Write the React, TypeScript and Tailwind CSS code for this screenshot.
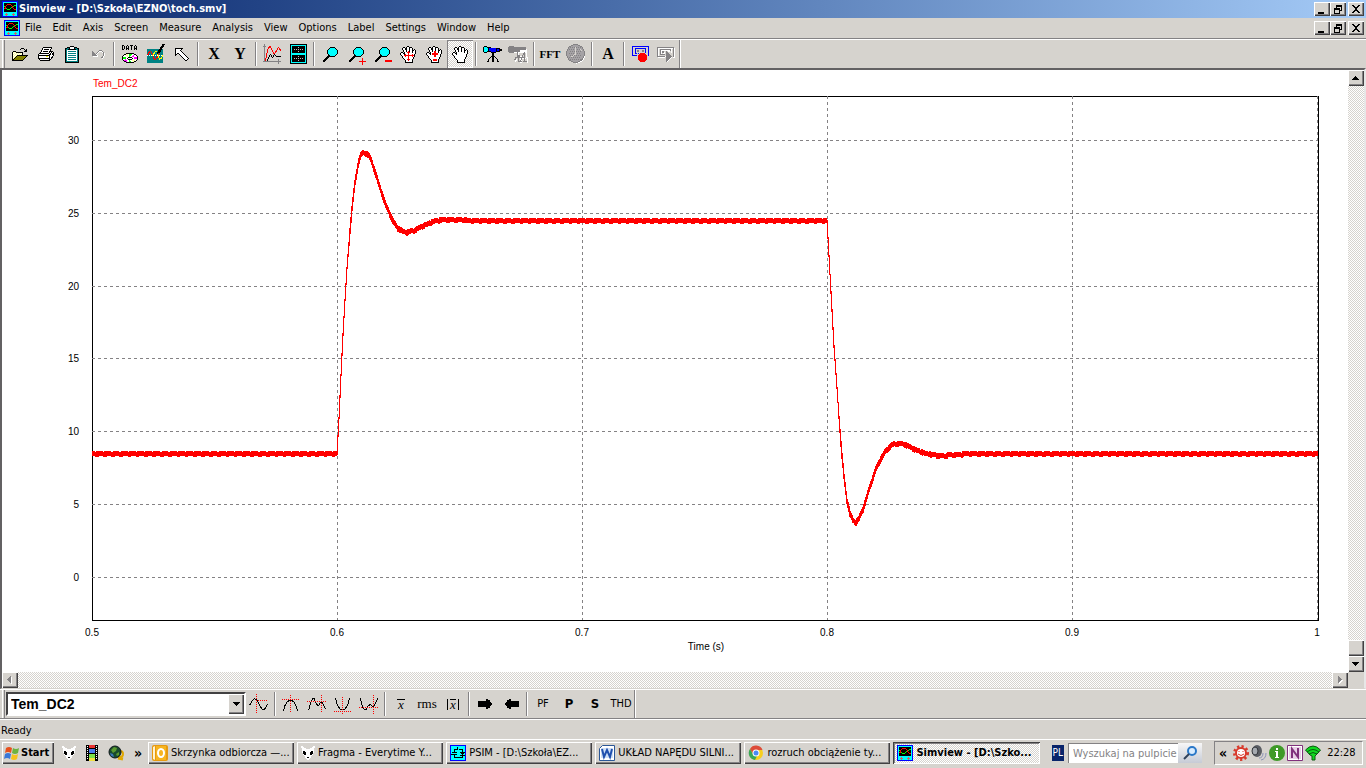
import clsx from "clsx";
import { ReactNode } from "react";

const RAISED =
  "bg-[#d6d3ce] shadow-[inset_1px_1px_#fff,inset_-1px_-1px_#424142,inset_-2px_-2px_#848284]";
const DITHER =
  "bg-[repeating-conic-gradient(#fff_0_25%,#d6d3ce_0_50%)] bg-[length:2px_2px]";

const PALETTE: Record<string, string> = {
  "#": "#000000",
  w: "#ffffff",
  r: "#ff0000",
  b: "#0000ff",
  c: "#00ffff",
  y: "#ffff00",
  Y: "#ffff9c",
  o: "#848200",
  g: "#848284",
  s: "#c6c3c6",
  t: "#008284",
  G: "#00ff00",
  m: "#ff00ff",
};

/* Pixel icon: one character per pixel, dots are transparent */
function Pixels({ rows, children }: { rows: string[]; children?: ReactNode }) {
  const width = Math.max(...rows.map((r) => r.length));
  const paths: Record<string, string> = {};
  rows.forEach((row, y) => {
    [...row].forEach((ch, x) => {
      if (ch === ".") return;
      paths[ch] = (paths[ch] ?? "") + `M${x} ${y}h1v1h-1z`;
    });
  });
  return (
    <svg
      width={width}
      height={rows.length}
      shapeRendering="crispEdges"
      className="shrink-0 overflow-visible"
      aria-hidden="true"
    >
      {Object.entries(paths).map(([ch, d]) => (
        <path key={ch} d={d} fill={PALETTE[ch]} />
      ))}
      {children}
    </svg>
  );
}

const OPEN = [
  ".........###....",
  "........#...#.#.",
  ".............##.",
  ".###........###.",
  "#YwY#######.....",
  "#wYwYwYwYw#.....",
  "#YwYwYwYwY#.....",
  "#wYwY###########",
  "#YwY#ooooooooo#.",
  "#wY#ooooooooo#..",
  "#Y#ooooooooo#...",
  "##ooooooooo#....",
  "###########.....",
];

const PRINT = [
  ".....#########..",
  "....#wwwwwwww#..",
  "....#w#####w#...",
  "...#wwwwwwww#...",
  "...#w#####w####.",
  "..#wwwwwwww#w#w#",
  ".##########w#w##",
  "#wwwwwwwwww##w##",
  "############www#",
  "#wwwwwwwyyw#ww#.",
  "#wwwwwwwwww#w##.",
  "############w#..",
  ".#wwwwwwwww##...",
  "..##########....",
];

const PASTE = [
  ".....####.....",
  "..###wwww###..",
  "##tt#wwww#tt##",
  "#tt########tt#",
  "#twwwwwwwwwwt#",
  "#twttttttttwt#",
  "#twwwwwwwwwwt#",
  "#twttttttttwt#",
  "#twwwwwwwwwwt#",
  "#twttttttttwt#",
  "#twwwwwwwwwwt#",
  "#twttttttttwt#",
  "#twwwwwwwwwwt#",
  "#twttttttttwt#",
  "#twwwwwwwwwwt#",
  "#tttttttttttt#",
  "##############",
];

const UNDO = [
  ".......ggg...",
  "g.....gwwwg..",
  "gg...gw...wg.",
  "ggg.gw.....gw",
  "ggggw......gw",
  "gggggw.....gw",
  ".wwwww....gw.",
  ".........ggw.",
  "..........w..",
];

const DISC = [
  "....########....",
  "..##YYwGGGww##..",
  ".#wwYYwGGwwmww#.",
  "#wwwwYwGwwmmwww#",
  "#GGGww####wwmmm#",
  "#GGGw#wwww#wmmm#",
  "#wwmww####wwYww#",
  ".#mmmwwGwwYYYw#.",
  "..##mwwGGwwY##..",
  "....########....",
];

const ARROW = [
  "########.......",
  "#wwwww#........",
  "#wwww#.........",
  "#wwwww#........",
  "#wwwwww#.......",
  "#w##wwww#......",
  "##..#wwww#.....",
  "#....#wwww#....",
  "......#wwww#...",
  ".......#wwww#..",
  "........#wwww#.",
  ".........#ww#..",
  "..........##...",
];

const HAND = [
  ".......##.......",
  "...##.#ww###....",
  "..#ww##ww#ww#...",
  "..#ww##ww#ww#.#.",
  "...#ww#ww#ww##w#",
  "...#ww#ww#ww#ww#",
  ".##.#wwwwwww#ww#",
  "#ww##wwwwwwwwww#",
  "#www#wwwwwwwww#.",
  ".#wwwwwwwwwwww#.",
  "..#wwwwwwwwwww#.",
  "..#wwwwwwwwww#..",
  "...#wwwwwwwww#..",
  "....#wwwwwww#...",
  ".....#wwwwww#...",
  ".....#wwwwww#...",
  ".....########...",
];

const MAGNIFIER = [
  ".......#####...",
  "......#ccccc#..",
  ".....#ccccccc#.",
  "....#ccccccccc#",
  "....#ccccccccc#",
  "....#ccccccccc#",
  "....#ccccccccc#",
  ".....#ccccccc#.",
  ".....##ccccc#..",
  "....########...",
  "...###.........",
  "..###..........",
  ".###...........",
  "###............",
  "##.............",
];

const SCOPE = [
  ".###...............",
  "#ccc####...........",
  "#cccc#bbbbbbb####..",
  "#cccc#bbbbbbb#bb###",
  "#cccc#bbbbbbb#bb###",
  "#ccc####bbbbb####..",
  ".###....#####......",
  ".........##........",
  ".........##........",
  ".........##........",
  "........####.......",
  ".......#.##.#......",
  "......#..##..#.....",
  ".....#...##...#....",
  ".....#...##...#....",
  "....##...##...##...",
];

const RECORD = [
  "bbbbbbbbbbbbbbbbb",
  "b...............b",
  "b..bbbbbbbbbbb..b",
  "b..b.........b..b",
  "b..b.gg...gg.b..b",
  "b..b.gg...gg.b..b",
  "b..b.........b..b",
  "b..bb.b.rrrrr...b",
  "b......rrrrrrr..b",
  "bbbbb.rrrrrrrrr.b",
  "......rrrrrrrrr..",
  "......rrrrrrrrr..",
  "......rrrrrrrrr..",
  "......rrrrrrrrr..",
  ".......rrrrrrr...",
  "........rrrrr....",
];

const PLAY = [
  "ggggggggggggggggg.",
  "gwwwwwwwwwwwwwwwgw",
  "gw.gggggggggggw.gw",
  "gw.gwwwwwwwwwgw.gw",
  "gw.gwgg..g.ww.w.gw",
  "gw.gwggw.gg...w.gw",
  "gw.gw.ww.ggg....gw",
  "gw.ggggg.gggg...gw",
  "gw.......ggggg..gw",
  "ggggggggwgggggg.gw",
  ".wwwwwww.gggggw.ww",
  ".........ggggw....",
  ".........gggw.....",
  ".........ggw......",
  ".........gw.......",
];

const RIGHT_ARROW = [
  "........##.....",
  "........####...",
  "############...",
  "#############..",
  "##############.",
  "##############.",
  "#############..",
  "############...",
  "........####...",
  "........##.....",
];

const ALIEN = [
  "ww..........ww",
  "www........www",
  ".wwww....wwww.",
  ".wwwwwwwwwwww.",
  ".wwwwwwwwwwww.",
  ".w##wwwwww##w.",
  ".w###wwww###w.",
  "..###wwww###..",
  "..w##wwww##w..",
  "...wwwwwwww...",
  "....wwwwww....",
  "....ww##ww....",
  ".....wwww.....",
  "......ww......",
];

function SimviewIcon() {
  return (
    <svg
      viewBox="0 0 16 16"
      className="size-4 shrink-0"
      shapeRendering="crispEdges"
      aria-hidden="true"
    >
      <path fill="#0000ff" d="M0 0h16v16H0z" />
      <path fill="#00ffff" d="M1 1h14v14H1z" />
      <path fill="#000" d="M2 2h12v9H2z" />
      <path
        fill="#ff0000"
        d="M2 7h2v1H2zM3 5h1v2H3zM4 4h1v1H4zM5 3h4v1H5zM9 4h1v1H9zM10 5h1v2h-1zM11 7h1v1h-1zM12 8h2v1h-2z"
      />
      <path
        fill="#00ff00"
        d="M2 5h1v1H2zM4 7h1v1H4zM5 8h3v1H5zM8 7h1v1H8zM9 6h1v1H9zM11 5h1v1h-1zM12 4h2v1h-2z"
      />
      <path fill="#c66" d="M4 12h1v3H4zM3 13h3v1H3zM11 12h1v3h-1zM10 13h3v1h-3z" />
    </svg>
  );
}

function DataIcon() {
  return (
    <span className="flex flex-col items-center gap-[3px]">
      <svg width="16" height="5" shapeRendering="crispEdges" aria-hidden="true">
        <path d="M0 0h2v1H1v3h1v1H0zM2 1h1v3H2zM5 0h1v1H5zM4 1h1v4H4zM6 1h1v4H6zM5 3h1v1H5zM8 0h3v1H8zM9 1h1v4H9zM13 0h1v1h-1zM12 1h1v4h-1zM14 1h1v4h-1zM13 3h1v1h-1z" />
      </svg>
      <Pixels rows={DISC} />
    </span>
  );
}

function WaveBrushIcon() {
  return (
    <svg width="18" height="20" shapeRendering="crispEdges" aria-hidden="true">
      <path fill="#008284" d="M0 5h16v14H0z" />
      <path fill="#fff" d={dots(0, 11, 8, "h")} />
      <path
        fill="none"
        stroke="#ff0000"
        d="M.5 11.500L2.500 7.500L4 8L7.500 15.500L9 15L12.500 9.500"
      />
      <path
        fill="none"
        stroke="#ffff00"
        d="M5 12L8.500 7.500L10 8L12.500 15L14.500 14.500L15.500 11"
      />
      <path fill="none" stroke="#000" strokeWidth="2" d="M17 0l-4 6" />
      <path fill="#000" d="M11 6h3v2h-1v1h-2v1h-1V8h1z" />
    </svg>
  );
}

function CurvesIcon() {
  return (
    <svg width="19" height="20" shapeRendering="crispEdges" aria-hidden="true">
      <path
        fill="#848284"
        d="M1 0h1v18H1zM0 2h3v1H0zM0 17h18v1H0zM15 15h1v5h-1z"
      />
      <path
        fill="none"
        stroke="#ff0000"
        d="M2.500 17.500L3.500 11L5.500 3.500L7.500 2.500L10.500 9.500L12 9L15.500 3.500L18.500 7.500"
      />
      <path
        fill="none"
        stroke="#000"
        d="M4 16.500L7.500 10.500L9.500 13.500L11.500 10.500L13.500 12.500L18 13"
      />
    </svg>
  );
}

function ScreensIcon() {
  return (
    <svg width="17" height="20" shapeRendering="crispEdges" aria-hidden="true">
      <path fill="#000" d="M0 0h17v20H0z" />
      <path fill="#00ffff" d="M1 1h15v18H1z" />
      <path fill="#000" d="M2 2h13v7H2zM2 11h13v7H2z" />
      <path
        fill="#bdbabd"
        d={
          dots(4, 5, 5, "h") +
          dots(4, 14, 5, "h") +
          dots(8, 3, 3, "v") +
          dots(8, 12, 3, "v")
        }
      />
    </svg>
  );
}

function PanHandIcon({ mode }: { mode: "all" | "vertical" }) {
  return (
    <Pixels rows={HAND}>
      {mode === "all" ? (
        <path
          fill="#ff0000"
          d="M8 5h1v10H8zM7 6h3v1H7zM7 13h3v1H7zM4 9h10v1H4zM5 8h1v3H5zM12 8h1v3h-1z"
        />
      ) : (
        <path fill="#ff0000" d="M8 5h2v6H8zM6 7h6v2H6zM7 13h4v2H7z" />
      )}
    </Pixels>
  );
}

function ScopeLabelIcon() {
  return (
    <svg width="20" height="18" shapeRendering="crispEdges" aria-hidden="true">
      <path
        fill="#fff"
        d="M2 2h6v2h11v4h-8v3h3v7h-1v-2h-1v-3h-1v4h-1v-4H9v3H8v1H7v-3h2V8H2z"
      />
      <path
        fill="#848284"
        d="M1 1h5v1h12v3h-6v2h-2v3h2v2h2v3h-1v-2h-2v4h-1v-4H8v2H6v-1h1v-2h2V7H6v1H1V7H0V2h1z"
      />
      <path
        fill="none"
        stroke="#fff"
        d="M12 17.500l4-10h2l2 10M14 13.500h4"
      />
      <path
        fill="none"
        stroke="#848284"
        d="M11 16.500h3M12.500 16l4-9v9M15 16.500h4M14 12.500h3"
      />
    </svg>
  );
}

function ClockIcon() {
  return (
    <svg width="20" height="20" shapeRendering="crispEdges" aria-hidden="true">
      <circle cx="10.500" cy="10.500" r="9" fill="#fff" />
      <circle cx="9.500" cy="9.500" r="9" fill="#a5a2a5" stroke="#848284" />
      <path
        fill="#848284"
        d={[3, 5, 7, 9, 11, 13, 15]
          .map((y) => dots(y % 4 === 1 ? 3 : 4, y, 6, "h"))
          .join("")}
      />
      <path fill="none" stroke="#d6d3ce" d="M9.500 3v7M9.500 10l-4 3M14 5l2 2" />
    </svg>
  );
}

/* Dotted line: count squares of one pixel with a one pixel gap */
function dots(x: number, y: number, count: number, dir: "h" | "v") {
  return Array.from({ length: count }, (_, i) =>
    dir === "h" ? `M${x + i * 2} ${y}h1v1h-1z` : `M${x} ${y + i * 2}h1v1h-1z`
  ).join("");
}

/* Black curve with dotted red marker lines, used by the measure buttons */
function MeasureIcon({ curve, marker }: { curve: string; marker: string }) {
  return (
    <svg width="20" height="20" shapeRendering="crispEdges" aria-hidden="true">
      <path fill="none" stroke="#000" d={curve} />
      <path fill="#ff0000" d={marker} />
    </svg>
  );
}

function ToolButton({
  label,
  pressed,
  disabled,
  children,
}: {
  label: string;
  pressed?: boolean;
  disabled?: boolean;
  children: ReactNode;
}) {
  return (
    <button
      type="button"
      aria-label={label}
      disabled={disabled}
      className={clsx(
        "flex h-7 w-[26px] shrink-0 items-center justify-center whitespace-nowrap",
        pressed && DITHER,
        pressed && "shadow-[inset_1px_1px_#848284,inset_-1px_-1px_#fff]"
      )}
    >
      {children}
    </button>
  );
}

function Separator() {
  return (
    <span className="mx-[2px] h-6 w-[2px] shrink-0 border-l border-r border-l-[#848284] border-r-white" />
  );
}

function Grip() {
  return (
    <span className="h-full w-[3px] shrink-0 border-l border-r border-l-white border-r-[#848284]" />
  );
}

function BandEnd() {
  return (
    <span className="h-full w-[2px] shrink-0 border-l border-r border-l-[#848284] border-r-white" />
  );
}

function WindowButtons() {
  const base = clsx(RAISED, "flex h-[14px] w-4 items-center justify-center");
  return (
    <div className="ml-auto flex pr-[2px]">
      <button type="button" aria-label="Minimize" className={base}>
        <svg width="10" height="9" shapeRendering="crispEdges">
          <path d="M1 7h6v2H1z" />
        </svg>
      </button>
      <button type="button" aria-label="Restore" className={base}>
        <svg width="10" height="9" shapeRendering="crispEdges">
          <path
            fillRule="evenodd"
            d="M3 0h6v6H7V5h1V2H4v1H3zM1 3h6v6H1zM2 5v3h4V5z"
          />
        </svg>
      </button>
      <button type="button" aria-label="Close" className={clsx(base, "ml-[2px]")}>
        <svg width="10" height="8" shapeRendering="crispEdges">
          <path d="M1 0h2v1h1v1h2V1h1V0h2v1H8v1H7v1H6v2h1v1h1v1h1v1H7V7H6V6H4v1H3v1H1V7h1V6h1V5h1V3H3V2H2V1H1z" />
        </svg>
      </button>
    </div>
  );
}

const MENUS = [
  "File",
  "Edit",
  "Axis",
  "Screen",
  "Measure",
  "Analysis",
  "View",
  "Options",
  "Label",
  "Settings",
  "Window",
  "Help",
];

function MainToolbar() {
  return (
    <div className="flex h-7 items-center pl-[2px]">
      <Grip />
      <div className="flex items-center pl-[2px]">
        <ToolButton label="Open">
          <Pixels rows={OPEN} />
        </ToolButton>
        <ToolButton label="Print">
          <Pixels rows={PRINT} />
        </ToolButton>
        <ToolButton label="Copy to clipboard">
          <Pixels rows={PASTE} />
        </ToolButton>
        <ToolButton label="Undo" disabled>
          <Pixels rows={UNDO} />
        </ToolButton>
        <Separator />
        <ToolButton label="Reload data">
          <DataIcon />
        </ToolButton>
        <ToolButton label="Redraw">
          <WaveBrushIcon />
        </ToolButton>
        <ToolButton label="Select">
          <Pixels rows={ARROW} />
        </ToolButton>
        <Separator />
        <ToolButton label="X axis">
          <span className="font-['Liberation_Serif',serif] text-base font-bold">
            X
          </span>
        </ToolButton>
        <ToolButton label="Y axis">
          <span className="font-['Liberation_Serif',serif] text-base font-bold">
            Y
          </span>
        </ToolButton>
        <Separator />
        <ToolButton label="Add curves">
          <CurvesIcon />
        </ToolButton>
        <ToolButton label="Add screen">
          <ScreensIcon />
        </ToolButton>
        <Separator />
        <ToolButton label="Zoom">
          <Pixels rows={MAGNIFIER} />
        </ToolButton>
        <ToolButton label="Zoom in">
          <Pixels rows={MAGNIFIER}>
            <path fill="#ff0000" d="M13 11h1v7h-1zM10 14h7v1h-7z" />
          </Pixels>
        </ToolButton>
        <ToolButton label="Zoom out">
          <Pixels rows={MAGNIFIER}>
            <path fill="#ff0000" d="M10 13h7v2h-7z" />
          </Pixels>
        </ToolButton>
        <ToolButton label="Pan both ways">
          <PanHandIcon mode="all" />
        </ToolButton>
        <ToolButton label="Pan vertically">
          <PanHandIcon mode="vertical" />
        </ToolButton>
        <ToolButton label="Pan" pressed>
          <Pixels rows={HAND} />
        </ToolButton>
        <Separator />
        <ToolButton label="Measure">
          <Pixels rows={SCOPE} />
        </ToolButton>
        <ToolButton label="Measure label" disabled>
          <ScopeLabelIcon />
        </ToolButton>
        <Separator />
        <ToolButton label="FFT">
          <span className="font-['Liberation_Serif',serif] text-[11px] font-bold">
            FFT
          </span>
        </ToolButton>
        <ToolButton label="Time domain" disabled>
          <ClockIcon />
        </ToolButton>
        <Separator />
        <ToolButton label="Text">
          <span className="font-['Liberation_Serif',serif] text-base font-bold">
            A
          </span>
        </ToolButton>
        <Separator />
        <ToolButton label="Record">
          <Pixels rows={RECORD} />
        </ToolButton>
        <ToolButton label="Play" disabled>
          <Pixels rows={PLAY} />
        </ToolButton>
      </div>
      <BandEnd />
    </div>
  );
}

const PLOT = { left: 90, top: 26, right: 1316, bottom: 550 };

const X_TICKS = [
  { x: 90, label: "0.5" },
  { x: 335, label: "0.6" },
  { x: 580, label: "0.7" },
  { x: 825, label: "0.8" },
  { x: 1070, label: "0.9" },
  { x: 1315, label: "1" },
];

const Y_TICKS = [
  { y: 70, label: "30" },
  { y: 143, label: "25" },
  { y: 216, label: "20" },
  { y: 288, label: "15" },
  { y: 361, label: "10" },
  { y: 434, label: "5" },
  { y: 507, label: "0" },
];

/* Torque: step up at 0.6 s, step down at 0.8 s */
const TORQUE: [number, number][] = [
  [90, 383.5],
  [335, 383.5],
  [337, 348],
  [339, 304],
  [341, 264],
  [343, 230],
  [345, 198],
  [347, 172],
  [350, 138],
  [353, 112],
  [356, 94],
  [359, 84],
  [362, 82],
  [366, 84],
  [368, 87],
  [372, 98],
  [376, 111],
  [380, 123],
  [384, 135],
  [388, 144],
  [392, 152],
  [396, 158],
  [401, 161],
  [405, 162],
  [412, 160],
  [418, 157],
  [425, 154],
  [432, 151],
  [442, 149],
  [456, 149],
  [465, 150],
  [488, 150.5],
  [825, 150.5],
  [829, 222],
  [832, 276],
  [836, 332],
  [838, 361],
  [840, 385],
  [842, 406],
  [845, 430],
  [848, 443],
  [851, 450],
  [854, 452],
  [857, 448],
  [861, 439],
  [865, 426],
  [869, 413],
  [873, 401],
  [877, 392],
  [881, 385],
  [884, 380],
  [888, 376],
  [893, 373],
  [900, 373],
  [907, 376],
  [915, 380],
  [923, 383],
  [935, 385],
  [945, 385],
  [960, 384],
  [975, 383.5],
  [1316, 383.5],
];

function torqueAt(x: number) {
  const i = Math.max(
    1,
    TORQUE.findIndex((p) => p[0] >= x)
  );
  const [x0, y0] = TORQUE[i - 1];
  const [x1, y1] = TORQUE[i];
  return y0 + ((y1 - y0) * (x - x0)) / (x1 - x0);
}

/* One column per pixel. The ripple runs at 300 Hz, 30 periods per 245 px */
function torqueBand() {
  let d = "";
  for (let x = PLOT.left; x < PLOT.right; x++) {
    const y0 = torqueAt(x);
    const y1 = torqueAt(x + 1);
    const half = Math.abs(y1 - y0) > 12 ? 1 : 2.5;
    const phase = (((x - PLOT.left) * 30) / 245) % 1;
    const dip = phase > 0.3 && phase < 0.45 ? 1 : 0;
    const bump = phase > 0.3 && phase < 0.75 ? 1 : 0;
    const top = Math.round(Math.min(y0, y1) - half) + dip;
    const bottom = Math.round(Math.max(y0, y1) + half) + bump;
    d += `M${x} ${top}h1V${bottom}h-1z`;
  }
  return d;
}

function Chart() {
  return (
    <svg
      viewBox="0 0 1346 602"
      preserveAspectRatio="xMidYMin meet"
      role="img"
      aria-label="Tem_DC2 against time"
      className="min-h-0 min-w-0 flex-1 bg-white font-['Liberation_Sans',Arial,sans-serif] text-[10px]"
    >
      <g shapeRendering="crispEdges" fill="none">
        <path
          stroke="#000"
          d={`M${PLOT.left + 0.5} ${PLOT.top + 0.5}H${PLOT.right}V${PLOT.bottom + 0.5}H${PLOT.left + 0.5}Z`}
        />
        {X_TICKS.map((t) => (
          <path
            key={t.label}
            stroke={t.x === PLOT.left ? "none" : "#848284"}
            strokeDasharray="3 3"
            d={`M${t.x + 0.5} ${PLOT.top}V${PLOT.bottom}`}
          />
        ))}
        {Y_TICKS.map((t) => (
          <path
            key={t.label}
            stroke="#848284"
            strokeDasharray="3 3"
            d={`M${PLOT.left} ${t.y + 0.5}H${PLOT.right}`}
          />
        ))}
        <path d={torqueBand()} fill="#ff0000" />
      </g>
      <text x="91" y="17" fill="#ff0000">
        Tem_DC2
      </text>
      {Y_TICKS.map((t) => (
        <text key={t.label} x="77" y={t.y + 4} textAnchor="end">
          {t.label}
        </text>
      ))}
      {X_TICKS.map((t) => (
        <text key={t.label} x={t.x} y="566" textAnchor="middle">
          {t.label}
        </text>
      ))}
      <text x="704" y="580" textAnchor="middle">
        Time (s)
      </text>
    </svg>
  );
}

function ScrollButton({
  label,
  d,
  disabled,
}: {
  label: string;
  d: string;
  disabled?: boolean;
}) {
  return (
    <button
      type="button"
      aria-label={label}
      disabled={disabled}
      className={clsx(RAISED, "flex size-4 shrink-0 items-center justify-center")}
    >
      <svg width="8" height="8" shapeRendering="crispEdges">
        {disabled && <path d={d} fill="#fff" transform="translate(1 1)" />}
        <path d={d} fill={disabled ? "#848284" : "#000"} />
      </svg>
    </button>
  );
}

function ChartWindow() {
  return (
    <div className="flex min-h-0 flex-1 flex-col border-t-2 border-r-2 border-b border-l-2 border-t-[#636163] border-r-[#e7e7e7] border-b-[#d6d3ce] border-l-[#636163]">
      <div className="flex min-h-0 flex-1">
        <Chart />
        <div className={clsx(DITHER, "flex w-4 flex-col")}>
          <ScrollButton
            label="Scroll up"
            d="M3 2h1v1h1v1h1v1h1v1H0V5h1V4h1V3h1z"
          />
          <div className="flex-1" />
          <div className={clsx(RAISED, "h-4")} />
          <ScrollButton
            label="Scroll down"
            d="M0 2h7v1H6v1H5v1H4v1H3V5H2V4H1V3H0z"
          />
        </div>
      </div>
      <div className="flex h-4">
        <div className={clsx(DITHER, "flex flex-1 justify-between")}>
          <ScrollButton
            label="Scroll left"
            disabled
            d="M4 0h1v7H4V6H3V5H2V4H1V3h1V2h1V1h1z"
          />
          <ScrollButton
            label="Scroll right"
            disabled
            d="M2 0h1v1h1v1h1v1h1v1H5v1H4v1H3v1H2z"
          />
        </div>
        <div className="w-4 bg-[#d6d3ce]" />
      </div>
    </div>
  );
}

function MeasureToolbar() {
  return (
    <div className="flex h-[30px] items-center border-t border-b border-t-white border-b-[#848284] pl-[2px]">
      <Grip />
      <div className="relative ml-px h-6 w-60 shrink-0">
        <select
          aria-label="Curve"
          className="h-6 w-full appearance-none border-2 border-t-[#424142] border-r-white border-b-white border-l-[#424142] bg-white pl-[3px] font-['Liberation_Sans',Arial,sans-serif] text-sm leading-5 font-bold"
        >
          <option>Tem_DC2</option>
        </select>
        <span
          className={clsx(
            RAISED,
            "pointer-events-none absolute top-[2px] right-[2px] flex h-5 w-4 items-center justify-center"
          )}
        >
          <svg width="7" height="4" shapeRendering="crispEdges">
            <path d="M0 0h7v1H6v1H5v1H4v1H3V3H2V2H1V1H0z" />
          </svg>
        </span>
      </div>
      <div className="flex items-center">
        <ToolButton label="Zero crossing">
          <MeasureIcon
            curve="M.5 11.500L3.500 6.500L5.500 4.500L8.500 6.500L10.500 11.500L13.500 15.500L15.500 15.500L18.500 10.500"
            marker={dots(7, 0, 10, "v") + dots(7, 6, 6, "h")}
          />
        </ToolButton>
        <Separator />
        <ToolButton label="Maximum">
          <MeasureIcon
            curve="M2.500 17.500L3.500 12.500L6.500 7.500L8.500 6.500L10.500 6.500L12.500 7.500L15.500 12.500L16.500 17.500"
            marker={dots(9, 1, 9, "v") + dots(1, 5, 9, "h")}
          />
        </ToolButton>
        <ToolButton label="Next maximum">
          <MeasureIcon
            curve="M1.500 16.500L3.500 9.500L5.500 4.500L7 4.500L9.500 10.500L11.500 11.500L13.500 8.500L15.500 8.500L18.500 15.500"
            marker={dots(14, 1, 9, "v") + dots(0, 7, 10, "h")}
          />
        </ToolButton>
        <ToolButton label="Minimum">
          <MeasureIcon
            curve="M2.500 4.500L4.500 11.500L7.500 15.500L11.500 15.500L14.500 11.500L16.500 4.500"
            marker={dots(9, 3, 9, "v") + dots(1, 17, 9, "h")}
          />
        </ToolButton>
        <ToolButton label="Next minimum">
          <MeasureIcon
            curve="M1.500 4.500L3.500 13.500L5.500 15.500L7 15.500L9.500 11.500L11.500 10.500L13.500 12.500L15.500 11.500L18.500 4.500"
            marker={dots(14, 1, 10, "v") + dots(0, 13, 10, "h")}
          />
        </ToolButton>
        <Separator />
        <div className="flex font-['Liberation_Serif',serif] text-[13px]">
          <ToolButton label="Average">
            <span className="border-t border-black px-px leading-[10px] italic">
              x
            </span>
          </ToolButton>
          <ToolButton label="RMS">rms</ToolButton>
          <ToolButton label="Average of absolute value">
            <span className="border-r border-l border-black px-[2px]">
              <span className="block border-t border-black leading-[10px] italic">
                x
              </span>
            </span>
          </ToolButton>
        </div>
        <Separator />
        <ToolButton label="Next point">
          <Pixels rows={RIGHT_ARROW} />
        </ToolButton>
        <ToolButton label="Previous point">
          <Pixels rows={RIGHT_ARROW.map((r) => [...r].reverse().join(""))} />
        </ToolButton>
        <Separator />
        <ToolButton label="Power factor">PF</ToolButton>
        <ToolButton label="Real power">
          <span className="text-[13px] font-bold">P</span>
        </ToolButton>
        <ToolButton label="Apparent power">
          <span className="text-[13px] font-bold">S</span>
        </ToolButton>
        <ToolButton label="Total harmonic distortion">THD</ToolButton>
      </div>
      <BandEnd />
    </div>
  );
}

function WindowsLogo() {
  return (
    <svg viewBox="0 0 16 16" className="size-4 shrink-0" aria-hidden="true">
      <path fill="#e8501c" d="M2 3q3-2 6 0L7 8Q4 6 1 8z" />
      <path fill="#6db33f" d="M9 3q3 2 6 0l-1 5q-3 2-6 0z" />
      <path fill="#3a78d8" d="M1 9q3-2 6 0l-1 5Q3 12 0 14z" />
      <path fill="#f5c21c" d="M8 9q3 2 6 0l-1 5q-3 2-6 0z" />
    </svg>
  );
}

function FilmIcon() {
  return (
    <svg
      width="12"
      height="16"
      shapeRendering="crispEdges"
      aria-hidden="true"
    >
      <path fill="#000" d="M0 0h12v16H0z" />
      <path fill="#e83030" d="M3 0h6v3H3z" />
      <path fill="#4a7cf0" d="M3 4h6v4H3z" />
      <path fill="#7be04a" d="M3 9h6v4H3z" />
      <path fill="#f0e040" d="M3 13h6v3H3z" />
      <path fill="#fff" d={dots(1, 1, 7, "v") + dots(10, 1, 7, "v")} />
    </svg>
  );
}

function GlobeSearchIcon() {
  return (
    <svg width="16" height="16" aria-hidden="true">
      <circle cx="12" cy="9" r="3" fill="none" stroke="#e0a800" strokeWidth="2" />
      <path stroke="#e0a800" strokeWidth="3" d="M10 13l5 1" />
      <circle cx="7" cy="7" r="6" fill="#184a2c" stroke="#10181c" />
      <path fill="#5a9a30" d="M3 5l3-3 3 1-1 3-3 2zM8 9l3-2v3l-2 1z" />
      <path fill="#3a78b8" d="M2 8l3 1 1 3-3-1z" />
    </svg>
  );
}

function OutlookIcon() {
  return (
    <svg viewBox="0 0 16 16" className="size-4 shrink-0" aria-hidden="true">
      <rect width="16" height="16" rx="2" fill="#e79a10" />
      <path fill="#fff3d0" d="M1 2l2-1v14l-2-1z" />
      <rect x="4" y="1" width="10" height="14" fill="#f7b520" />
      <ellipse cx="9" cy="8" rx="3" ry="4" fill="none" stroke="#fff" strokeWidth="2" />
    </svg>
  );
}

function PsimIcon() {
  return (
    <svg
      viewBox="0 0 16 16"
      className="size-4 shrink-0"
      shapeRendering="crispEdges"
      aria-hidden="true"
    >
      <path fill="#00ffff" stroke="#0000ff" d="M.5 .5h15v15H.5z" />
      <path d="M4 4h3v1H4zM7 2h1v2H7zM9 4h4v1H9zM4 5h1v2H4zM2 7h5v1H2zM1 9h6v1H1zM4 10h1v3H4zM4 12h9v1H4zM12 5h1v8h-1zM10 7h5v1h-5zM11 8h3v1h-3zM10 10h5v1h-5zM7 4h1v1H7z" />
    </svg>
  );
}

function WordIcon() {
  return (
    <svg viewBox="0 0 16 16" className="size-4 shrink-0" aria-hidden="true">
      <path fill="#fff" stroke="#2b5797" d="M3.500 .5h12v15H.5v-12z" />
      <path fill="#cfe0f7" d="M2 3h12v10H2z" />
      <path
        fill="none"
        stroke="#1f4fae"
        strokeWidth="2"
        d="M3 4l2 8 3-7 3 7 2-8"
      />
    </svg>
  );
}

function ChromeIcon() {
  return (
    <svg viewBox="0 0 16 16" className="size-4 shrink-0" aria-hidden="true">
      <circle cx="8" cy="8" r="7" fill="#f7cf1e" />
      <path fill="#dd4b39" d="M2 4a7 7 0 0 1 12.500 1H8L5 9z" />
      <path fill="#3aa757" d="M2 4l3.500 6L9 11l-2 4A7 7 0 0 1 2 4z" />
      <circle cx="8" cy="8" r="3.500" fill="#fff" />
      <circle cx="8" cy="8" r="2.500" fill="#4a8af4" />
    </svg>
  );
}

const TASKS = [
  { title: "Skrzynka odbiorcza —...", icon: <OutlookIcon /> },
  { title: "Fragma - Everytime Y...", icon: <Pixels rows={ALIEN} /> },
  { title: "PSIM - [D:\\Szkoła\\EZ...", icon: <PsimIcon /> },
  { title: "UKŁAD NAPĘDU SILNI...", icon: <WordIcon /> },
  { title: "rozruch obciążenie ty...", icon: <ChromeIcon /> },
  { title: "Simview - [D:\\Szko...", icon: <SimviewIcon />, active: true },
];

function TrayIcons() {
  return (
    <div className="flex items-center gap-[2px]">
      <svg width="16" height="16" aria-hidden="true">
        <circle
          cx="8"
          cy="8"
          r="6"
          fill="none"
          stroke="#d83a2c"
          strokeWidth="4"
          strokeDasharray="2 2"
        />
        <circle cx="8" cy="8" r="5" fill="#fff" stroke="#d83a2c" strokeWidth="2" />
        <path
          fill="none"
          stroke="#d83a2c"
          d="M6 6v1M10 6v1M5 9q3 3 6 0"
        />
      </svg>
      <svg width="16" height="16" aria-hidden="true">
        <ellipse cx="6" cy="6" rx="5" ry="6" fill="#5a5d63" />
        <ellipse cx="4" cy="6" rx="3" ry="4" fill="#a5aab0" stroke="#32353a" />
        <path
          fill="none"
          stroke="#8a92b8"
          d="M8 13q4 0 4-5M10 15q5-1 5-7"
        />
      </svg>
      <svg width="16" height="16" aria-hidden="true">
        <circle cx="8" cy="8" r="8" fill="#3f9a28" />
        <path fill="#fff" d="M7 3h2v2H7zM6 6h3v6h1v1H6v-1h1V7H6z" />
      </svg>
      <svg width="16" height="16" aria-hidden="true">
        <path fill="#fff" stroke="#80307c" d="M.5 .5h15v15H.5z" />
        <path fill="#e8cfe6" d="M2 2h12v12H2z" />
        <path fill="none" stroke="#80307c" strokeWidth="2" d="M5 13V4l6 8V3" />
      </svg>
      <svg width="16" height="16" aria-hidden="true">
        <path
          fill="#10d820"
          stroke="#0a5a10"
          d="M.5 5Q8-3 15.500 5L13 8l-2 2-1 1v4H7v-4L5 10z"
        />
        <path fill="none" stroke="#0a5a10" d="M2 7q6-5 12 0M4 9q4-3 8 0" />
      </svg>
    </div>
  );
}

function Taskbar() {
  return (
    <footer className="flex h-[29px] items-center border-t border-white pr-[3px] pb-[2px] pl-[2px]">
      <button
        type="button"
        className={clsx(
          RAISED,
          "flex h-[22px] w-[52px] shrink-0 items-center gap-px pl-[2px] font-bold"
        )}
      >
        <WindowsLogo />
        Start
      </button>
      <div className="flex w-[94px] shrink-0 items-center gap-[10px] pl-2">
        <Pixels rows={ALIEN} />
        <FilmIcon />
        <GlobeSearchIcon />
        <button
          type="button"
          aria-label="More"
          className="h-5 text-sm leading-3 font-bold"
        >
          »
        </button>
      </div>
      <div className="grid min-w-0 flex-1 grid-cols-6 gap-[3px]">
        {TASKS.map((task) => (
          <button
            key={task.title}
            type="button"
            className={clsx(
              "flex h-[22px] min-w-0 items-center gap-[3px] px-1 whitespace-nowrap",
              task.active
                ? "font-bold shadow-[inset_1px_1px_#424142,inset_-1px_-1px_#fff,inset_2px_2px_#848284]"
                : RAISED,
              task.active && DITHER
            )}
          >
            {task.icon}
            <span className="overflow-hidden">{task.title}</span>
          </button>
        ))}
      </div>
      <span className="ml-3 bg-[#08246b] px-px text-[10px] leading-4 text-white">
        PL
      </span>
      <div className="ml-1 flex h-5 items-center">
        <input
          type="text"
          aria-label="Wyszukaj na pulpicie"
          placeholder="Wyszukaj na pulpicie"
          className="h-5 w-[110px] border-t border-l border-[#848284] bg-white pl-1 placeholder:text-[#848284]"
        />
        <button
          type="button"
          aria-label="Szukaj"
          className="flex h-5 w-6 items-center justify-center bg-linear-to-b from-[#f7f7f7] to-[#c6cbd6]"
        >
          <svg width="14" height="14" aria-hidden="true">
            <circle
              cx="9"
              cy="5"
              r="4"
              fill="#d8ecff"
              stroke="#2a78c8"
              strokeWidth="2"
            />
            <path stroke="#31415a" strokeWidth="2" d="M6 8l-5 5" />
          </svg>
        </button>
      </div>
      <div className="ml-3 flex h-6 w-[149px] shrink-0 items-center gap-[6px] border border-t-[#848284] border-r-white border-b-white border-l-[#848284] pl-1">
        <button
          type="button"
          aria-label="Show hidden icons"
          className="h-5 text-sm leading-4 font-bold"
        >
          «
        </button>
        <TrayIcons />
        <time>22:28</time>
      </div>
    </footer>
  );
}

export default function App() {
  return (
    <div className="flex h-screen flex-col overflow-hidden bg-[#d6d3ce] font-['DejaVu_Sans_Condensed','Noto_Sans',sans-serif] text-[11px] leading-[14px] text-black">
      <header className="flex h-[18px] items-center gap-px bg-linear-to-r from-[#08246b] to-[#a5cbf7] pl-[2px]">
        <SimviewIcon />
        <h1 className="font-bold text-white">
          Simview - [D:\Szkoła\EZNO\toch.smv]
        </h1>
        <WindowButtons />
      </header>
      <nav className="flex h-[21px] items-center border-b border-[#848284] pl-1">
        <SimviewIcon />
        <div className="flex gap-[11px] pl-[5px]">
          {MENUS.map((name) => (
            <button key={name} type="button">
              {name}
            </button>
          ))}
        </div>
        <WindowButtons />
      </nav>
      <div className="border-t border-white">
        <MainToolbar />
      </div>
      <ChartWindow />
      <MeasureToolbar />
      <div className="h-5 border-t border-white px-px pt-1">Ready</div>
      <Taskbar />
    </div>
  );
}
